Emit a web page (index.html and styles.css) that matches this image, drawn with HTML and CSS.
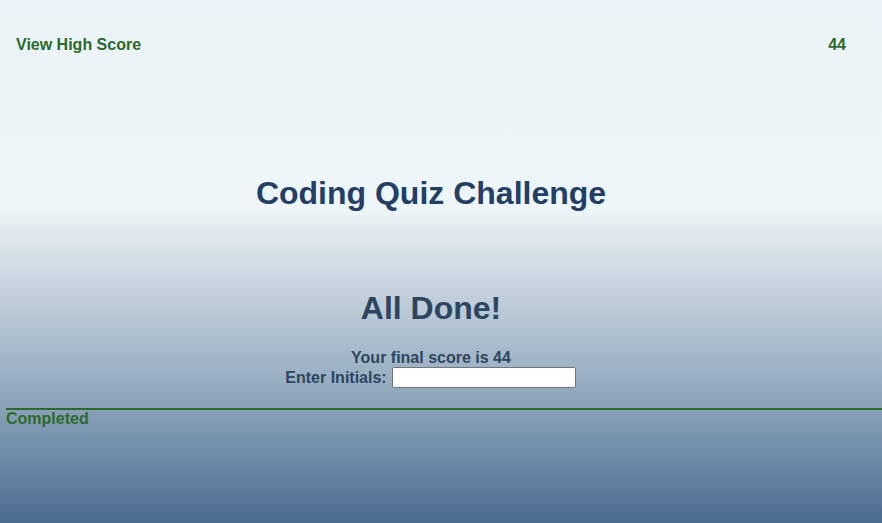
FILE: index.html
```html
<!DOCTYPE html>
<html>
<head>
<meta charset="utf-8">
<link rel="stylesheet" href="styles.css">
</head>
<body>
<header class="top">
  <a class="high" href="#">View High Score</a>
  <span class="timer">44</span>
</header>
<main class="quiz">
  <h1 class="title">Coding Quiz Challenge</h1>
  <section class="done">
    <h2 class="done-title">All Done!</h2>
    <p class="final">Your final score is 44</p>
    <form class="form">
      <label class="label" for="ini">Enter Initials:</label>
      <input class="input" id="ini" type="text">
    </form>
  </section>
</main>
<div class="result">Completed</div>
</body>
</html>
```
FILE: styles.css
```css
html, body {
  margin: 0;
  height: 100%;
}
body {
  font-family: "Liberation Sans", Arial, sans-serif;
  background: linear-gradient(to bottom, #eaf3f7 0%, #eef6f9 40%, #e3eaef 44%, #92a9be 75%, #4a6b8f 100%);
  background-repeat: no-repeat;
  min-height: 523px;
}
.top {
  display: flex;
  justify-content: space-between;
  align-items: center;
  padding: 36px 36px 0 16px;
  font-weight: bold;
  font-size: 16px;
  color: #2b6a2b;
}
.high {
  color: #2b6a2b;
  text-decoration: none;
}
.quiz {
  display: flex;
  flex-direction: column;
  align-items: center;
  padding: 0 26px 0 6px;
}
.title {
  margin: 121px 0 0;
  font-size: 32px;
  color: #233f66;
  line-height: 37px;
}
.done {
  display: flex;
  flex-direction: column;
  align-items: center;
  margin-top: 78px;
}
.done-title {
  margin: 0;
  font-size: 32px;
  color: #2e4561;
  line-height: 37px;
}
.final {
  margin: 22px 0 0;
  font-size: 16px;
  font-weight: bold;
  color: #2e4561;
  line-height: 18px;
}
.form {
  display: flex;
  align-items: center;
  gap: 5px;
  margin-top: 0;
  margin-left: -1px;
}
.label {
  font-size: 16px;
  font-weight: bold;
  color: #2e4561;
}
.input {
  width: 178px;
  height: 17px;
  padding: 1px 2px;
  border: 1px solid #767676;
  border-radius: 2px;
  background: #fff;
}
.result {
  margin: 20px 0 0 6px;
  border-top: 2px solid #2b6a2b;
  font-size: 16px;
  font-weight: bold;
  color: #2b6a2b;
  line-height: 18px;
}
```
